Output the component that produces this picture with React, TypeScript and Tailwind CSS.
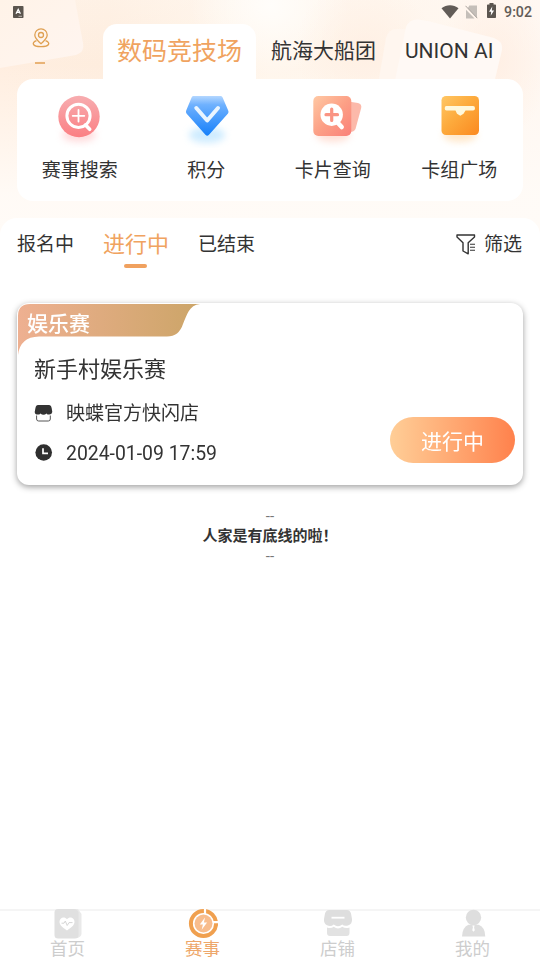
import type { ReactNode } from "react";

const StatusBar = () => (
  <div className="flex h-6 items-center justify-between pl-[13px] pr-2">
    <svg width="11" height="12" viewBox="0 0 11 12">
      <rect width="10.5" height="12" rx="0.8" fill="#5b554e" />
      <path d="M3 7.8 5.2 3.4 7.4 7.8M3.9 6.4h2.6" fill="none" stroke="#fff" strokeWidth="1.3" />
      <path d="M5.5 10.3h3.5" stroke="#d8d0c8" strokeWidth="0.8" />
    </svg>
    <div className="flex items-center">
      <svg className="-mt-[2px]" width="18" height="15" viewBox="0 0 18 15">
        <path d="M0.5 4.2C5.5 0.1 12.5 0.1 17.5 4.2L9 14.5Z" fill="#625c57" />
      </svg>
      <svg className="ml-[6px]" width="13" height="14" viewBox="0 0 13 14">
        <path d="M4.3 0.5H12V13L2.8 3.3ZM1 4.7 9.5 13.5H1Z" fill="#c5bfb9" />
        <path d="M0.5 0.8 12.3 13.2" stroke="#aaa39d" strokeWidth="1" />
      </svg>
      <svg className="-mt-[3px] ml-[9px]" width="9" height="15" viewBox="0 0 9 15">
        <path d="M0 2.2Q0 1.4 0.8 1.4H2.5V0H6.5V1.4H8.2Q9 1.4 9 2.2V14.2Q9 15 8.2 15H0.8Q0 15 0 14.2Z" fill="#5b554f" />
        <path d="M5.3 3.5 2 8.7H4.2L3.7 12.8 7.1 7.4H4.8Z" fill="#fff" />
      </svg>
      <span className="ml-2 text-[14.2px] leading-6 font-medium text-[#625c57]">9:02</span>
    </div>
  </div>
);

const HeaderBackground = () => (
  <svg className="absolute inset-x-0 top-0" width="540" height="260" viewBox="0 0 540 260">
    <defs>
      <linearGradient id="bgBase" x1="0" y1="0" x2="1" y2="0">
        <stop offset="0" stopColor="#ffeee0" />
        <stop offset="0.2" stopColor="#feedde" />
        <stop offset="0.5" stopColor="#fff6ec" />
        <stop offset="0.7" stopColor="#fff5eb" />
        <stop offset="1" stopColor="#fff7f1" />
      </linearGradient>
      <linearGradient id="bgFade" x1="0" y1="0" x2="0" y2="1">
        <stop offset="0" stopColor="#fffaf5" stopOpacity="0.3" />
        <stop offset="0.25" stopColor="#fffaf5" stopOpacity="0" />
        <stop offset="0.75" stopColor="#fffbf7" stopOpacity="0.95" />
        <stop offset="0.9" stopColor="#fffbf7" stopOpacity="1" />
      </linearGradient>
      <linearGradient id="sheet" x1="0" y1="0" x2="1" y2="1">
        <stop offset="0" stopColor="#fff3e8" />
        <stop offset="1" stopColor="#fff5f0" />
      </linearGradient>
      <radialGradient id="glow">
        <stop offset="0" stopColor="#ffecdf" />
        <stop offset="1" stopColor="#ffecdf" stopOpacity="0" />
      </radialGradient>
      <radialGradient id="light">
        <stop offset="0" stopColor="#fffdfa" />
        <stop offset="1" stopColor="#fffdfa" stopOpacity="0" />
      </radialGradient>
    </defs>
    <rect width="540" height="260" fill="url(#bgBase)" />
    <rect width="540" height="260" fill="url(#bgFade)" />
    <ellipse cx="270" cy="5" rx="80" ry="70" fill="url(#light)" />
    <ellipse cx="365" cy="50" rx="70" ry="70" fill="url(#glow)" opacity="0.6" />
    <ellipse cx="495" cy="60" rx="55" ry="80" fill="url(#glow)" opacity="0.7" />
    <path d="M0 0H75L83 43Q85 52 76 55L0 68Z" fill="url(#sheet)" />
    <path d="M377 90 386 38Q388 29 397 29L440 30V90Z" fill="#fff6ef" />
    <path d="M391 100 406 27Q409 19 418 19.5L428 21 494 38Q503 41 502 50L490 100Z" fill="#fff9f5" />
  </svg>
);

const SearchIcon = () => (
  <svg className="-ml-[2px]" width="58" height="56" viewBox="0 0 58 56">
    <defs>
      <linearGradient id="pink" x1="0" y1="0" x2="0" y2="1">
        <stop offset="0" stopColor="#f7adb0" />
        <stop offset="1" stopColor="#fb7f83" />
      </linearGradient>
      <filter id="soft" x="-30%" y="-100%" width="160%" height="300%">
        <feGaussianBlur stdDeviation="3.5" />
      </filter>
    </defs>
    <ellipse cx="29" cy="43" rx="17" ry="7" fill="#ffc4c6" opacity="0.6" filter="url(#soft)" />
    <circle cx="29" cy="24.5" r="20.7" fill="url(#pink)" />
    <circle cx="28.5" cy="23.8" r="11.6" fill="none" stroke="#fff" strokeWidth="3" />
    <path d="M28.5 18v11.6M22.7 23.8h11.6" stroke="#fff" strokeWidth="1.8" strokeLinecap="round" />
    <path d="m35.5 33 4.2 4.3" stroke="#fff" strokeWidth="3.6" strokeLinecap="round" />
  </svg>
);

const PointsIcon = () => (
  <svg width="58" height="56" viewBox="0 0 58 56">
    <defs>
      <linearGradient id="blue" x1="0" y1="0" x2="0" y2="1">
        <stop offset="0" stopColor="#b4d7ff" />
        <stop offset="0.22" stopColor="#6fb1fe" />
        <stop offset="1" stopColor="#1680fa" />
      </linearGradient>
    </defs>
    <ellipse cx="29" cy="43" rx="18" ry="8" fill="#b5e2ff" opacity="0.65" filter="url(#soft)" />
    <path d="M15.5 4H42.5Q43.8 4 44.5 5.3L50.2 18.5Q51 20 50 21.4L31 42.8Q29.2 44.7 27.4 42.8L8.5 21.4Q7.5 20 8.2 18.5L13.7 5.3Q14.3 4 15.5 4Z" fill="url(#blue)" />
    <path d="M18.3 16 29.2 28.5 40 16" fill="none" stroke="#eaf5ff" strokeWidth="4" strokeLinecap="round" strokeLinejoin="round" />
  </svg>
);

const CardSearchIcon = () => (
  <svg className="ml-[2px]" width="58" height="56" viewBox="0 0 58 56">
    <defs>
      <linearGradient id="coral" x1="0" y1="0" x2="1" y2="1">
        <stop offset="0" stopColor="#ffc9a4" />
        <stop offset="0.5" stopColor="#fca086" />
        <stop offset="1" stopColor="#fa8079" />
      </linearGradient>
    </defs>
    <ellipse cx="28" cy="43" rx="17" ry="7" fill="#ffcdbd" opacity="0.6" filter="url(#soft)" />
    <path d="M40 9 53 11Q57 12 56.2 16L50.5 37Q49 40 45 40H35Z" fill="#fcb9aa" />
    <rect x="8.3" y="4" width="38" height="40" rx="5" fill="url(#coral)" />
    <circle cx="26.7" cy="22.7" r="11.2" fill="#fff" />
    <path d="m33 31 3.7 4" stroke="#fff" strokeWidth="4.5" strokeLinecap="round" />
    <path d="M26.7 17v11.5M21 22.7h11.5" stroke="#fa9483" strokeWidth="3.2" strokeLinecap="round" />
  </svg>
);

const DeckIcon = () => (
  <svg width="58" height="56" viewBox="0 0 58 56">
    <defs>
      <linearGradient id="amber" x1="0" y1="0" x2="1" y2="1">
        <stop offset="0" stopColor="#ffc765" />
        <stop offset="0.45" stopColor="#fdab3d" />
        <stop offset="1" stopColor="#fb8920" />
      </linearGradient>
    </defs>
    <ellipse cx="29" cy="43" rx="17" ry="7" fill="#ffd8a8" opacity="0.6" filter="url(#soft)" />
    <rect x="10.5" y="4" width="37.5" height="39" rx="4.5" fill="url(#amber)" />
    <path d="M15.5 14H42Q44 14 44 16.2T42 18.5H34.5L32.5 21.8 29.3 23.7 26 21.8 24.5 18.5H15.5Q13.7 18.5 13.7 16.2T15.5 14Z" fill="#fff8dc" />
  </svg>
);

const HomeIcon = () => (
  <svg width="30" height="31" viewBox="0 0 30 31">
    <path d="M6 1H25L28.5 6V26Q28 29 24 30L5 28Z" fill="#e9e9e9" />
    <path d="M5 1H21Q24 1 25.5 4V27Q25.5 30.5 22 30.5H5Q1.5 30.5 1.5 27V4.5Q1.5 1 5 1Z" fill="#e0e0e0" />
    <path d="M14 22.5C9.5 19.5 6.5 17.2 6.5 13.8 6.5 9.4 11.5 8 14 11.3 16.5 8 21.5 9.4 21.5 13.8 21.5 17.2 18.5 19.5 14 22.5Z" fill="#fff" />
    <path d="M8.5 15.2H11L12.3 13 14.2 17.5 16 14.6H19.5" fill="none" stroke="#d6d6d6" strokeWidth="1" />
  </svg>
);

const MatchIcon = () => (
  <svg width="30" height="31" viewBox="0 0 30 31">
    <circle cx="15.5" cy="15.5" r="12.6" fill="none" stroke="#f0a04f" strokeWidth="4" />
    <path d="M17 0v7M22 14.2h8" stroke="#fff" strokeWidth="2.2" />
    <circle cx="15.5" cy="15.5" r="9" fill="#f8bd8d" />
    <path d="m17 9.5-5.2 7h3.1l-1.2 5.2 5.4-7.2h-3.2Z" fill="#fff" />
  </svg>
);

const ShopIcon = () => (
  <svg width="30" height="31" viewBox="0 0 30 31">
    <path d="M6 2H24Q27 2 28 5.5L29 11Q29.5 16 25 17.5 21 18.5 19.3 16.4 15 20 10.7 16.4 8 19 4 17.3 0.5 15.5 1 11L2 5.5Q3 2 6 2Z" fill="#dedede" />
    <path d="M4 19.5Q8 21 10.7 18.8 15 22 19.3 18.8 22.5 21 26.5 19.5V25Q26.5 28 23.5 28H7Q4 28 4 25Z" fill="#e2e2e2" />
    <path d="M8.5 9.7H21.5" stroke="#fff" strokeWidth="1.8" />
  </svg>
);

const MineIcon = () => (
  <svg width="30" height="31" viewBox="0 0 30 31">
    <circle cx="15.5" cy="9.5" r="7.7" fill="#dedede" />
    <path d="M10.5 16.8H20.5Q27 19 27.3 28.5H4Q4.5 19 10.5 16.8Z" fill="#dedede" />
    <path d="M14.4 17.5h2.2l-.5 2 .7 2.8-1.3 1.4-1.3-1.4.7-2.8Z" fill="#fff" />
  </svg>
);

const quickLinks: { label: string; icon: ReactNode }[] = [
  { label: "赛事搜索", icon: <SearchIcon /> },
  { label: "积分", icon: <PointsIcon /> },
  { label: "卡片查询", icon: <CardSearchIcon /> },
  { label: "卡组广场", icon: <DeckIcon /> },
];

const navItems: { label: string; icon: ReactNode; active?: boolean }[] = [
  { label: "首页", icon: <HomeIcon /> },
  { label: "赛事", icon: <MatchIcon />, active: true },
  { label: "店铺", icon: <ShopIcon /> },
  { label: "我的", icon: <MineIcon /> },
];

const GameTabs = () => (
  <div className="flex h-[55px]">
    <div className="flex w-[103px] flex-col items-start pl-[32px] pt-[4px]">
      <svg width="18" height="20" viewBox="0 0 18 20" fill="none" stroke="#dfa052" strokeWidth="1.3">
        <path d="M9 15.7C5.5 12.7 2.8 10.3 2.8 7a6.2 6.2 0 0 1 12.4 0C15.2 10.3 12.5 12.7 9 15.7Z" />
        <circle cx="9" cy="7" r="2.5" />
        <path d="M4.5 12.7C-.8 14.5.2 18.7 9 18.7S18.8 14.5 13.5 12.7" />
      </svg>
      <div className="ml-[3px] mt-[14px] h-[2px] w-[10px] bg-[#e9b376]" />
    </div>
    <div className="flex w-[153px] justify-center rounded-t-[14px] bg-white text-[25px] leading-[56px] text-[#f0a360]">
      数码竞技场
    </div>
    <div className="ml-[15px] text-[21px] leading-[55px] text-[#333]">航海大船团</div>
    <div className="ml-[29px] whitespace-nowrap text-[21px] leading-[54px] text-[#333]">UNION AI</div>
  </div>
);

const MatchCard = () => (
  <div className="mx-[17px] h-[182px] overflow-hidden rounded-[12px] bg-white">
    <div className="relative h-[50px]">
      <svg className="absolute left-0 top-0" width="190" height="52" viewBox="0 0 190 52">
        <defs>
          <linearGradient id="ribbon" x1="0" y1="0" x2="1" y2="0">
            <stop offset="0" stopColor="#eeb091" />
            <stop offset="1" stopColor="#cca568" />
          </linearGradient>
        </defs>
        <path d="M1 52V13Q1 1 13 1H183C172 2 170 12 166 21Q162 33.5 150 33.5H22Q3 34 1 52Z" fill="url(#ribbon)" />
      </svg>
      <span className="relative block pl-[10px] text-[21px] font-medium leading-[42px] text-white">娱乐赛</span>
    </div>
    <div className="flex h-[132px] justify-between pl-[17px] pr-2">
      <div className="text-[19px] text-[#333]">
        <div className="h-[41px] text-[22px] leading-[34px]">新手村娱乐赛</div>
        <div className="flex h-10 items-center">
          <svg className="-mt-[2px] mr-[13px]" width="19" height="18" viewBox="0 0 19 18">
            <path d="M4 1h11Q17 1 17.7 4.2L18.3 8Q17.8 10.6 15.2 10.6 13.3 10.6 12.4 9.4 11.2 10.7 9.5 10.7T6.5 9.4Q5.5 10.6 3.8 10.6.9 10.6.7 8L1.4 4.2Q2 1 4 1Z" fill="#333" />
            <path d="M2.6 11.5V15Q2.6 17 4.6 17H14.3Q16.3 17 16.3 15V11.5" fill="none" stroke="#555" strokeWidth="1" />
          </svg>
          <span className="pt-px">映蝶官方快闪店</span>
        </div>
        <div className="flex h-10 items-center">
          <svg className="-mt-[2px] mr-[13px]" width="19" height="18" viewBox="0 0 19 18">
            <circle cx="9.7" cy="8.5" r="8.3" fill="#2f2f2f" />
            <path d="M9 4.2v5.2h5" fill="none" stroke="#fff" strokeWidth="1.7" />
          </svg>
          <span className="text-[19.4px]">2024-01-09 17:59</span>
        </div>
      </div>
      <button className="mt-[64px] h-[46px] w-[125px] rounded-full bg-linear-to-r from-[#ffce97] to-[#ff814c] pt-[4px] text-[21px] leading-[42px] text-white">
        进行中
      </button>
    </div>
  </div>
);

const App = () => {
  return (
    <div className="relative flex h-[960px] w-[540px] flex-col overflow-hidden bg-white font-['Roboto','Noto_Sans_CJK_SC',sans-serif]">
      <HeaderBackground />
      <header className="relative h-[218px]">
        <StatusBar />
        <GameTabs />
        <div className="mx-[17px] flex h-[122px] justify-between rounded-[16px] bg-white">
          {quickLinks.map((item) => (
            <div key={item.label} className="flex w-[126.5px] flex-col items-center pt-[13px]">
              {item.icon}
              <span className="mt-[9px] pr-px text-[19px] leading-[28px] text-[#333]">{item.label}</span>
            </div>
          ))}
        </div>
      </header>

      <main className="relative flex-1 rounded-t-[17px] bg-white">
        <div className="flex h-[85px] items-start px-[17px] text-[19px] leading-[54px] text-[#333]">
          <span>报名中</span>
          <div className="ml-[29px] flex flex-col items-center text-[22px] text-[#f0a360]">
            <span>进行中</span>
            <div className="-mt-[8px] mr-px h-1 w-[23px] rounded-[2px] bg-[#f0a15f]" />
          </div>
          <span className="ml-[29px]">已结束</span>
          <div className="-mr-px ml-auto flex items-center pr-[2px]">
            <svg className="-mt-[2px] mr-2" width="20" height="21" viewBox="0 0 20 21" fill="none" stroke="#333" strokeWidth="1.4" strokeLinejoin="round">
              <path d="M1 1H18.5V3L12.2 8.7V19.8L7 17V8.7L1 3Z" />
              <path d="M14 10.3h5M14 13.3h5M14 16.3h5" strokeWidth="1.1" />
            </svg>
            <span>筛选</span>
          </div>
        </div>
        <div className="drop-shadow-[0_2px_3px_rgba(0,0,0,0.38)]">
          <MatchCard />
        </div>
        <div className="mt-[21px] text-center text-[15px] leading-5 text-[#333]">
          <div className="text-[#777]">--</div>
          <div className="font-bold">人家是有底线的啦！</div>
          <div className="text-[#777]">--</div>
        </div>
      </main>

      <nav className="relative flex h-[51px] border-t-2 border-[#f5f5f5] bg-white">
        {navItems.map((item) => (
          <div
            key={item.label}
            className={`-mt-[3px] flex flex-1 flex-col items-center text-[17.5px] leading-[20px] ${item.active ? "text-[#eea76a]" : "text-[#cdcdcd]"}`}
          >
            {item.icon}
            <span>{item.label}</span>
          </div>
        ))}
      </nav>
    </div>
  );
};

export default App;
